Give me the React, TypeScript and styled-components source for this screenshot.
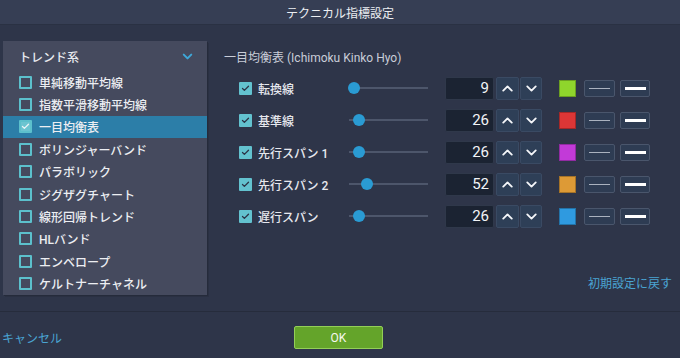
import React from 'react';
import styled, { createGlobalStyle } from 'styled-components';
import { Check, ChevronDown, ChevronUp } from 'lucide-react';

const GlobalStyle = createGlobalStyle`
  html, body {
    margin: 0;
    padding: 0;
    background: #2e3549;
  }
  body {
    font-family: Roboto, "Noto Sans CJK JP", sans-serif;
    color: #e6e8ee;
  }
`;

const indicators = [
  '単純移動平均線',
  '指数平滑移動平均線',
  '一目均衡表',
  'ボリンジャーバンド',
  'パラボリック',
  'ジグザグチャート',
  '線形回帰トレンド',
  'HLバンド',
  'エンベロープ',
  'ケルトナーチャネル',
];

const lines = [
  { label: '転換線', value: 9, color: '#8fd52c' },
  { label: '基準線', value: 26, color: '#dc3636' },
  { label: '先行スパン 1', value: 26, color: '#c23ad8' },
  { label: '先行スパン 2', value: 52, color: '#dd9a36' },
  { label: '遅行スパン', value: 26, color: '#2f9ae0' },
];

const App: React.FC = () => {
  return (
    <Dialog>
      <GlobalStyle />
      <TitleBar>テクニカル指標設定</TitleBar>

      <Body>
        <ListPanel>
          <ListHeader>
            <span>トレンド系</span>
            <ChevronDown size={15} strokeWidth={3.2} color="#3ea7d8" />
          </ListHeader>
          {indicators.map(name => {
            const selected = name === '一目均衡表';
            return (
              <ListItem key={name} selected={selected}>
                <Box checked={selected} light>
                  {selected && <Check size={11} strokeWidth={3.5} color="#e9f4f7" />}
                </Box>
                {name}
              </ListItem>
            );
          })}
        </ListPanel>

        <Settings>
          <SettingsTitle>一目均衡表 (Ichimoku Kinko Hyo)</SettingsTitle>
          {lines.map(line => (
            <LineRow key={line.label}>
              <Box checked>
                <Check size={11} strokeWidth={3.5} color="#2b3346" />
              </Box>
              <LineLabel>{line.label}</LineLabel>
              <Slider>
                <Track />
                <Thumb style={{ left: 4.4 + line.value * 0.294 - 6 }} />
              </Slider>
              <NumberBox>{line.value}</NumberBox>
              <StepButton>
                <ChevronUp size={17} strokeWidth={2.6} />
              </StepButton>
              <StepButton narrow>
                <ChevronDown size={17} strokeWidth={2.6} />
              </StepButton>
              <Swatch color={line.color} />
              <WidthButton>
                <Stroke weight={1} />
              </WidthButton>
              <WidthButton thick>
                <Stroke weight={3} />
              </WidthButton>
            </LineRow>
          ))}
          <Spacer />
          <ResetLink>初期設定に戻す</ResetLink>
        </Settings>
      </Body>

      <Footer>
        <CancelLink>キャンセル</CancelLink>
        <OkButton>OK</OkButton>
      </Footer>
    </Dialog>
  );
};

const Dialog = styled.div`
  width: 680px;
  height: 358px;
  display: flex;
  flex-direction: column;
  background: #2e3549;
  overflow: hidden;
`;

const TitleBar = styled.div`
  height: 25px;
  background: #363e54;
  display: flex;
  align-items: center;
  justify-content: center;
  font-size: 12px;
  color: #eceef2;
  border-bottom: 1px solid #2a3143;
  box-sizing: border-box;
`;

const Body = styled.div`
  height: 287px;
  display: flex;
  padding: 16px 0 0 3px;
  box-sizing: border-box;
  border-bottom: 1px solid #262c3c;
`;

const ListPanel = styled.div`
  width: 204px;
  height: 254px;
  background: #454a5e;
  box-shadow: 1px 1px 0 #252b3b, 2px 2px 0 #2a3042;
  display: flex;
  flex-direction: column;
`;

const ListHeader = styled.div`
  height: 30px;
  display: flex;
  align-items: center;
  justify-content: space-between;
  padding: 0 12px 0 16px;
  font-size: 12px;
  font-weight: 500;
  color: #e9ebf0;
`;

const ListItem = styled.div<{ selected?: boolean }>`
  height: 22.4px;
  display: flex;
  align-items: center;
  gap: 7px;
  padding-left: 16px;
  font-size: 12px;
  font-weight: 500;
  color: #eceef2;
  background: ${({ selected }) => (selected ? '#2c7ea8' : 'transparent')};
`;

const Box = styled.span<{ checked?: boolean; light?: boolean }>`
  width: 13px;
  height: 13px;
  box-sizing: border-box;
  flex: none;
  display: flex;
  align-items: center;
  justify-content: center;
  border: 2px solid ${({ light }) => (light ? '#5cc0cc' : '#63c2cf')};
  border-radius: 1px;
  background: ${({ checked, light }) =>
    checked ? (light ? '#6cc4d0' : '#63c2cf') : 'transparent'};
`;

const Settings = styled.div`
  flex: 1;
  display: flex;
  flex-direction: column;
  padding: 2px 8px 0 17px;
`;

const SettingsTitle = styled.div`
  height: 27px;
  margin-bottom: 2px;
  display: flex;
  align-items: center;
  font-size: 12px;
  color: #c9cdd8;
`;

const LineRow = styled.div`
  height: 32px;
  display: flex;
  align-items: center;
  padding-left: 15px;
`;

const LineLabel = styled.span`
  width: 89px;
  margin-left: 6px;
  font-size: 12px;
  font-weight: 500;
  color: #e6e8ee;
`;

const Slider = styled.div`
  position: relative;
  width: 82px;
  height: 12px;
  margin-right: 16px;
  display: flex;
  align-items: center;
`;

const Track = styled.div`
  margin-left: 2px;
  width: 79px;
  height: 2px;
  background: #4d566b;
`;

const Thumb = styled.div`
  position: absolute;
  top: 0;
  width: 12px;
  height: 12px;
  border-radius: 50%;
  background: #2a9bd3;
`;

const NumberBox = styled.div`
  width: 49px;
  height: 23px;
  box-sizing: border-box;
  display: flex;
  align-items: center;
  justify-content: flex-end;
  padding-right: 4px;
  background: #1b2332;
  border: 1px solid #2f384a;
  border-radius: 2px;
  font-size: 15px;
  color: #f2f4f7;
`;

const StepButton = styled.div<{ narrow?: boolean }>`
  width: ${({ narrow }) => (narrow ? 22 : 23)}px;
  height: 23px;
  margin-left: ${({ narrow }) => (narrow ? 1 : 2)}px;
  box-sizing: border-box;
  display: flex;
  align-items: center;
  justify-content: center;
  background: #2e3f57;
  border: 1px solid #3a4a63;
  border-radius: 2px;
  color: #f4f6f9;
`;

const Swatch = styled.div<{ color: string }>`
  width: 17px;
  height: 17px;
  margin-left: 17px;
  box-sizing: border-box;
  background: ${({ color }) => color};
  border: 1px solid rgba(0, 0, 0, 0.25);
`;

const WidthButton = styled.div<{ thick?: boolean }>`
  width: ${({ thick }) => (thick ? 30 : 31)}px;
  height: 17px;
  margin-left: ${({ thick }) => (thick ? 5 : 8)}px;
  box-sizing: border-box;
  display: flex;
  align-items: center;
  justify-content: center;
  background: #2e3c53;
  border: 1px solid #4a566c;
  border-radius: 2px;
`;

const Stroke = styled.div<{ weight: number }>`
  width: 21px;
  height: ${({ weight }) => weight}px;
  background: ${({ weight }) => (weight > 1 ? '#ffffff' : '#aab2bf')};
`;

const Spacer = styled.div`
  flex: 1;
`;

const ResetLink = styled.div`
  align-self: flex-end;
  margin-bottom: 20px;
  font-size: 12px;
  color: #4aa4d2;
`;

const Footer = styled.div`
  flex: 1;
  position: relative;
  display: flex;
  align-items: center;
  justify-content: center;
  padding-top: 5px;
`;

const CancelLink = styled.div`
  position: absolute;
  left: 2px;
  top: 50%;
  transform: translateY(-50%);
  margin-top: 2px;
  font-size: 12px;
  color: #4aa4d2;
`;

const OkButton = styled.div`
  width: 89px;
  height: 23px;
  margin-right: 3px;
  box-sizing: border-box;
  display: flex;
  align-items: center;
  justify-content: center;
  background: #64a42a;
  border: 1px solid #93cf57;
  border-radius: 2px;
  font-size: 12px;
  color: #f4f8ee;
`;

export default App;
